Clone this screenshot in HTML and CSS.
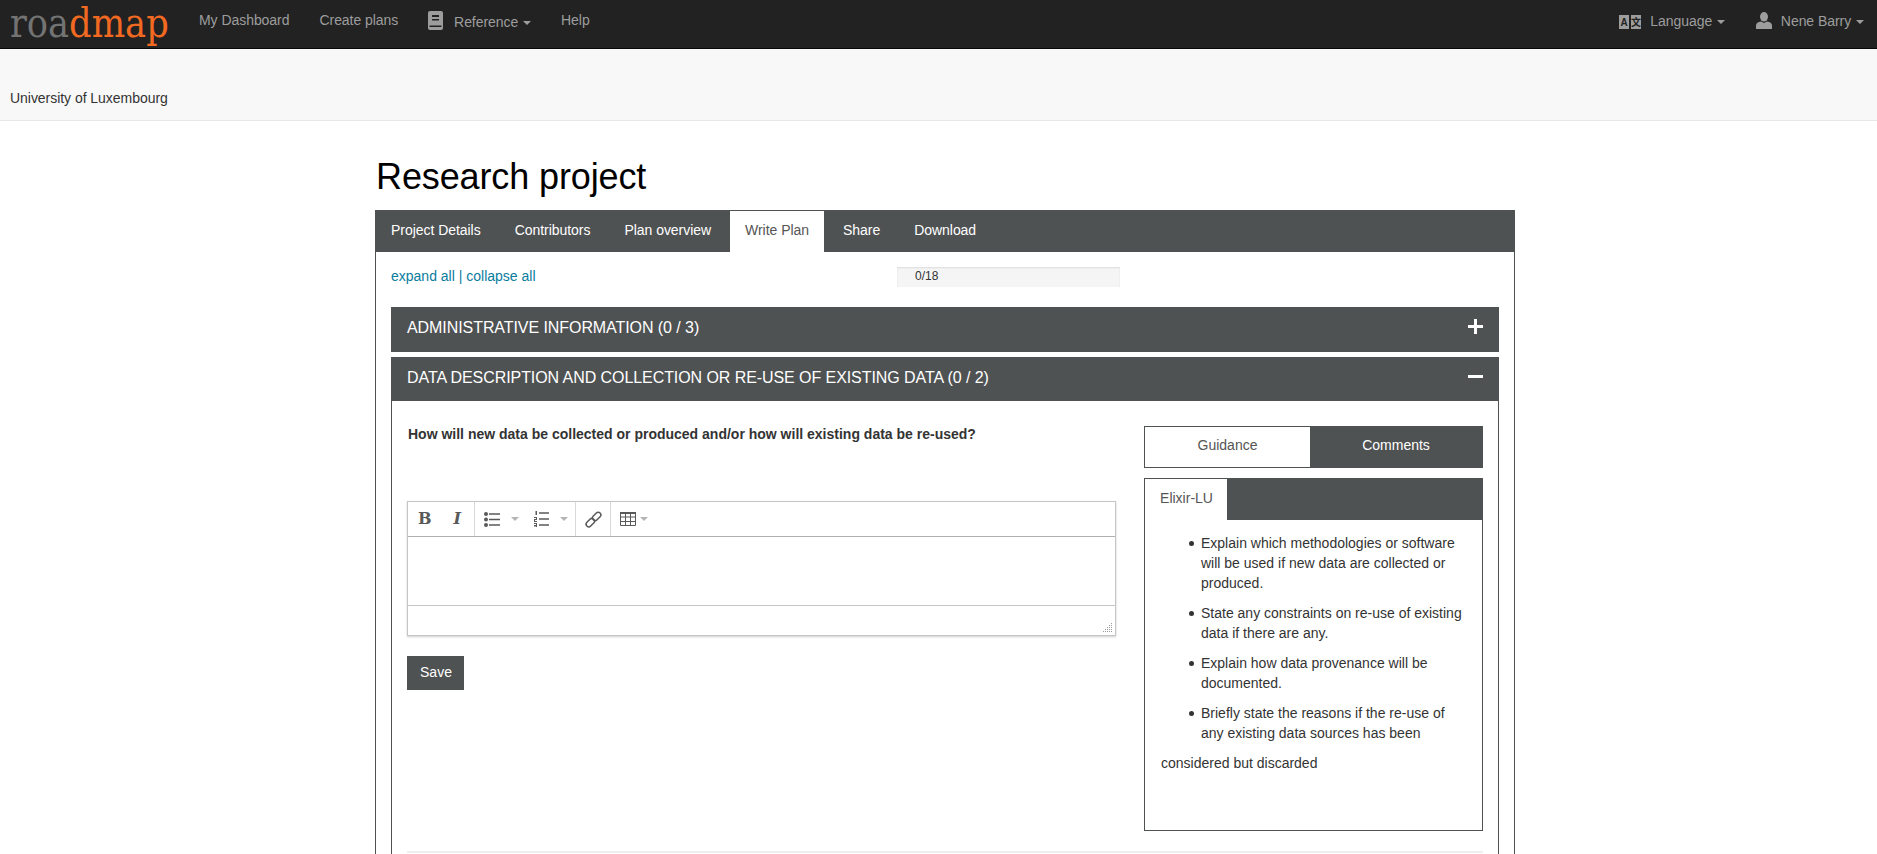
FILE: index.html
```html
<!DOCTYPE html>
<html>
    <head>
        <meta charset="utf-8">
        <title>Research project</title>
        <link rel="stylesheet" href="styles.css">
    </head>
    <body>
        <div id="topbar">
            <div class="logo-box">
                <a class="logo" href="#"><span class="logo-grey">roa</span><span class="logo-orange">dmap</span></a>
            </div>
            <ul class="topnav">
                <li><a href="#">My Dashboard</a></li>
                <li><a href="#">Create plans</a></li>
                <li class="with-icon">
                    <a href="#">
                        <svg class="nav-icon" width="15" height="19" viewBox="0 0 15 19">
                            <path fill="#9d9d9d" fill-rule="evenodd" d="M2 0h11a2 2 0 0 1 2 2v15a2 2 0 0 1-2 2H2a2 2 0 0 1-2-2V2a2 2 0 0 1 2-2zM4 4v2h7V4zM4 8v1.500h7V8zM1.500 14.500V16h12v-1.500z"/>
                        </svg>
                        Reference <span class="caret"></span>
                    </a>
                </li>
                <li><a href="#">Help</a></li>
            </ul>
            <ul class="topnav topnav-right">
                <li class="with-icon">
                    <a href="#">
                        <svg class="nav-icon icon-lang" width="22" height="14" viewBox="0 0 22 14">
                            <rect width="10" height="14" fill="#9d9d9d"/>
                            <rect x="12" width="10" height="14" fill="#9d9d9d"/>
                            <text x="5" y="11" class="icon-letter">A</text>
                            <text x="17" y="11" class="icon-letter">文</text>
                        </svg>
                        Language <span class="caret"></span>
                    </a>
                </li>
                <li class="with-icon">
                    <a href="#">
                        <svg class="nav-icon icon-user" width="16" height="17" viewBox="0 0 16 17">
                            <ellipse cx="8" cy="4.800" rx="4" ry="4.800" fill="#9d9d9d"/>
                            <path fill="#9d9d9d" d="M5 9.500l3 1.500 3-1.500c3 .5 5 1.700 5 3.800V17H0v-3.700c0-2.100 2-3.300 5-3.800z"/>
                        </svg>
                        Nene Barry <span class="caret"></span>
                    </a>
                </li>
            </ul>
        </div>

        <div id="org">University of Luxembourg</div>

        <div id="main">
            <h1>Research project</h1>

            <ul id="tabs">
                <li><a href="#">Project Details</a></li>
                <li><a href="#">Contributors</a></li>
                <li><a href="#">Plan overview</a></li>
                <li class="active"><a href="#">Write Plan</a></li>
                <li><a href="#">Share</a></li>
                <li><a href="#">Download</a></li>
            </ul>

            <div id="content">
                <div class="tools">
                    <div><a href="#">expand all</a> <span class="link-sep">|</span> <a href="#">collapse all</a></div>
                    <div class="progress">0/18</div>
                </div>

                <div class="section-head section-head-first">
                    <span>ADMINISTRATIVE INFORMATION (0 / 3)</span>
                    <span class="plus"></span>
                </div>

                <div class="section-head">
                    <span>DATA DESCRIPTION AND COLLECTION OR RE-USE OF EXISTING DATA (0 / 2)</span>
                    <span class="minus"></span>
                </div>

                <div class="section-body">
                    <div class="question-row">
                        <div>
                            <p class="question">How will new data be collected or produced and/or how will existing data be re-used?</p>

                            <div class="editor">
                                <div class="toolbar">
                                    <div class="tool-group group-text">
                                        <span class="tool-b">B</span>
                                        <span class="tool-i">I</span>
                                    </div>
                                    <div class="tool-group group-lists">
                                        <svg width="16" height="15" viewBox="0 0 16 15">
                                            <g fill="#595959">
                                                <circle cx="2" cy="2" r="2"/><circle cx="2" cy="7.500" r="2"/><circle cx="2" cy="13" r="2"/>
                                                <rect x="5" y="1.250" width="11" height="1.500"/><rect x="5" y="6.750" width="11" height="1.500"/><rect x="5" y="12.250" width="11" height="1.500"/>
                                            </g>
                                        </svg>
                                        <span class="tool-caret caret-list"></span>
                                        <svg width="15" height="16" viewBox="0 0 15 16">
                                            <g fill="#595959">
                                                <rect x="1.500" y="0" width="1.500" height="4"/>
                                                <rect x="0" y="6" width="3" height="1"/><rect x="2" y="7" width="1" height="1"/><rect x="0" y="8" width="3" height="1"/><rect x="0" y="9" width="1" height="1"/><rect x="0" y="10" width="3" height="1"/>
                                                <rect x="0" y="12" width="3" height="1"/><rect x="2" y="13" width="1" height="1"/><rect x="0" y="14" width="3" height="1"/><rect x="2" y="15" width="1" height="1"/><rect x="0" y="15.500" width="3" height=".5"/>
                                                <rect x="5" y="1.250" width="10" height="1.500"/><rect x="5" y="7.250" width="10" height="1.500"/><rect x="5" y="13.250" width="10" height="1.500"/>
                                            </g>
                                        </svg>
                                        <span class="tool-caret caret-list-last"></span>
                                    </div>
                                    <div class="tool-group group-link">
                                        <svg width="17" height="17" viewBox="0 0 16 16">
                                            <g fill="none" stroke="#595959" stroke-width="1.400">
                                                <rect x="8.500" y="0.500" width="5" height="9" rx="2.500" transform="rotate(45 11 5)"/>
                                                <rect x="2.500" y="6.500" width="5" height="9" rx="2.500" transform="rotate(45 5 11)"/>
                                            </g>
                                        </svg>
                                    </div>
                                    <div class="tool-group group-table">
                                        <svg width="16" height="14" viewBox="0 0 16 14">
                                            <path fill="none" stroke="#595959" d="M.5.500h15v13H.5zM.5 5h15M.5 9.500h15M5.500.500v13M10.500.500v13"/>
                                            <rect width="16" height="2" fill="#595959"/>
                                        </svg>
                                        <span class="tool-caret caret-table"></span>
                                    </div>
                                </div>
                                <div class="edit-area"></div>
                                <div class="statusbar">
                                    <svg width="10" height="10" viewBox="0 0 10 10">
                                        <g fill="#9a9a9a">
                                            <rect x="8" y="0" width="1" height="1"/><rect x="6" y="2" width="1" height="1"/><rect x="8" y="2" width="1" height="1"/>
                                            <rect x="4" y="4" width="1" height="1"/><rect x="6" y="4" width="1" height="1"/><rect x="8" y="4" width="1" height="1"/>
                                            <rect x="2" y="6" width="1" height="1"/><rect x="4" y="6" width="1" height="1"/><rect x="6" y="6" width="1" height="1"/><rect x="8" y="6" width="1" height="1"/>
                                            <rect x="0" y="8" width="1" height="1"/><rect x="2" y="8" width="1" height="1"/><rect x="4" y="8" width="1" height="1"/><rect x="6" y="8" width="1" height="1"/><rect x="8" y="8" width="1" height="1"/>
                                        </g>
                                    </svg>
                                </div>
                            </div>

                            <button class="save" type="button">Save</button>
                        </div>

                        <div class="side">
                            <div class="side-switch">
                                <div class="switch-on">Guidance</div>
                                <div class="switch-off">Comments</div>
                            </div>
                            <div class="guidance">
                                <div class="guidance-tabs">
                                    <div class="guidance-tab">Elixir-LU</div>
                                </div>
                                <div class="guidance-text">
                                    <ul>
                                        <li>Explain which methodologies or software will be used if new data are collected or produced.</li>
                                        <li>State any constraints on re-use of existing data if there are any.</li>
                                        <li>Explain how data provenance will be documented.</li>
                                        <li>Briefly state the reasons if the re-use of any existing data sources has been</li>
                                    </ul>
                                    <p>considered but discarded</p>
                                </div>
                            </div>
                        </div>
                    </div>
                    <hr>
                </div>
            </div>
        </div>
    </body>
</html>
```

FILE: styles.css
```css
html, body {
    margin: 0;
    height: 854px;
    overflow: hidden;
}

body {
    font-family: "Liberation Sans", Arial, sans-serif;
    font-size: 14px;
    line-height: 20px;
    color: #333333;
    background: white;
}

a {
    text-decoration: none;
}

ul {
    list-style: none;
    margin: 0;
    padding: 0;
}

/* top bar */
#topbar {
    display: flex;
    height: 48px;
    background: #222222;
    border-bottom: 1px solid #080808;
}

.logo-box {
    width: 199px;
    padding-left: 10px;
    box-sizing: border-box;
}

.logo {
    display: block;
    font-family: "DejaVu Serif", serif;
    font-size: 41px;
    line-height: 46px;
    white-space: nowrap;
    transform: scaleX(0.86);
    transform-origin: left;
}

.logo-grey {
    color: #737373;
}

.logo-orange {
    color: #f26a21;
}

.topnav {
    display: flex;
    gap: 30px;
    padding-top: 10px;
    letter-spacing: -0.05px;
}

.topnav-right {
    gap: 31px;
    margin-left: auto;
    padding-right: 13px;
}

.topnav a {
    color: #9d9d9d;
    white-space: nowrap;
}

.with-icon {
    padding-top: 1px;
}

.nav-icon {
    margin-right: 7px;
    vertical-align: -3px;
}

.icon-lang {
    margin-right: 5px;
}

.icon-user {
    margin-right: 5px;
}

.icon-letter {
    font-family: "Liberation Sans", "Noto Sans CJK SC", sans-serif;
    font-size: 10px;
    font-weight: bold;
    text-anchor: middle;
    fill: #222222;
}

.caret {
    display: inline-block;
    margin-left: 1px;
    vertical-align: middle;
    border-top: 4px solid #9d9d9d;
    border-left: 4px solid transparent;
    border-right: 4px solid transparent;
}

#org {
    height: 72px;
    box-sizing: border-box;
    padding: 39px 0 0 10px;
    letter-spacing: -0.04px;
    background: #f8f8f8;
    border-bottom: 1px solid #e7e7e7;
}

/* main column */
#main {
    width: 1140px;
    margin-left: 375px;
}

h1 {
    margin: 36px 0 13px 1px;
    font-size: 36px;
    font-weight: normal;
    line-height: 40px;
    letter-spacing: -0.12px;
    color: black;
}

#tabs {
    display: flex;
    gap: 4px;
    height: 41px;
    padding: 1px 0 0 1px;
    letter-spacing: -0.04px;
    background: #4f5253;
}

#tabs a {
    display: block;
    padding: 9px 15px 11px 15px;
    color: white;
}

#tabs .active {
    background: white;
}

#tabs .active a {
    color: #555555;
}

#content {
    height: 640px;
    padding: 15px 15px 0 15px;
    border: 1px solid #4f5253;
    border-top: none;
}

.tools {
    display: grid;
    grid-template-columns: 506px 223px;
    height: 20px;
    margin-bottom: 20px;
    line-height: 18px;
}

.tools a, .link-sep {
    color: #0a7c9e;
}

.progress {
    height: 20px;
    padding-left: 18px;
    box-sizing: border-box;
    font-size: 12px;
    color: #333333;
    background: #f5f5f5;
    box-shadow: inset 0 1px 2px rgba(0, 0, 0, 0.1);
}

.section-head {
    display: flex;
    justify-content: space-between;
    align-items: center;
    height: 44px;
    box-sizing: border-box;
    padding: 0 16px 3px 16px;
    font-size: 16px;
    letter-spacing: -0.07px;
    color: white;
    background: #4f5253;
}

.section-head-first {
    height: 45px;
    margin-bottom: 5px;
    padding-bottom: 4px;
}

.plus, .minus {
    position: relative;
    display: block;
    width: 15px;
    height: 15px;
    margin-top: -2px;
}

.plus::before, .minus::before {
    content: "";
    position: absolute;
    left: 0;
    top: 6px;
    width: 15px;
    height: 3px;
    background: white;
}

.plus::after {
    content: "";
    position: absolute;
    left: 6px;
    top: 0;
    width: 3px;
    height: 15px;
    background: white;
}

.section-body {
    height: 500px;
    padding: 23px 15px 0 15px;
    border-left: 1px solid #4f5253;
    border-right: 1px solid #4f5253;
}

.question-row {
    display: grid;
    grid-template-columns: 709px 339px;
    column-gap: 28px;
}

.question {
    margin: 0 0 57px 1px;
    font-weight: bold;
}

/* editor */
.editor {
    border: 1px solid #c5c5c5;
    box-shadow: 0 1px 2px rgba(0, 0, 0, 0.2);
}

.toolbar {
    display: flex;
    height: 34px;
    border-bottom: 1px solid #b0b0b0;
}

.tool-group {
    display: flex;
    align-items: center;
    box-sizing: border-box;
    border-right: 1px solid #d9d9d9;
}

.group-text {
    width: 67px;
    padding-left: 10px;
    gap: 22px;
}

.group-lists {
    width: 101px;
    padding-left: 9px;
}

.group-link {
    width: 35px;
    padding-left: 9px;
}

.group-table {
    padding-left: 9px;
    border-right: none;
}

.tool-b, .tool-i {
    font-family: "DejaVu Serif", serif;
    font-size: 16px;
    font-weight: bold;
    color: #595959;
}

.tool-i {
    font-style: italic;
}

.tool-caret {
    display: block;
    border-top: 4px solid #b5b5b5;
    border-left: 4px solid transparent;
    border-right: 4px solid transparent;
}

.caret-list {
    margin: 0 15px 0 11px;
}

.caret-list-last {
    margin-left: 11px;
}

.caret-table {
    margin-left: 4px;
}

.edit-area {
    height: 68px;
    border-bottom: 1px solid #c5c5c5;
}

.statusbar {
    display: flex;
    justify-content: flex-end;
    align-items: flex-end;
    height: 29px;
    padding: 0 2px 2px 0;
    box-sizing: border-box;
}

.save {
    display: block;
    width: 57px;
    height: 34px;
    margin-top: 20px;
    padding: 0 0 2px 1px;
    font-family: inherit;
    font-size: 14px;
    color: white;
    background: #4f5253;
    border: none;
}

/* guidance side */
.side {
    margin-top: 2px;
}

.side-switch {
    display: grid;
    grid-template-columns: 165px 1fr;
    height: 42px;
    margin-bottom: 10px;
    text-align: center;
    line-height: 36px;
    box-sizing: border-box;
    border: 1px solid #4f5253;
}

.switch-on {
    color: #555555;
}

.switch-off {
    color: white;
    background: #4f5253;
}

.guidance {
    height: 353px;
    box-sizing: border-box;
    border: 1px solid #4f5253;
    border-top: none;
}

.guidance-tabs {
    height: 42px;
    background: #4f5253;
    padding-top: 1px;
    box-sizing: border-box;
}

.guidance-tab {
    width: 82px;
    height: 41px;
    box-sizing: border-box;
    padding-left: 1px;
    line-height: 38px;
    text-align: center;
    color: #555555;
    background: white;
}

.guidance-text {
    padding: 13px 15px 0 16px;
}

.guidance-text ul {
    padding-left: 40px;
}

.guidance-text li {
    position: relative;
    margin-bottom: 10px;
}

/* small dot, closer to the text than the browser's disc */
.guidance-text li::before {
    content: "";
    position: absolute;
    left: -12px;
    top: 8px;
    width: 5px;
    height: 5px;
    border-radius: 50%;
    background: #333333;
}

.guidance-text p {
    margin: 0;
}

hr {
    height: 0;
    margin: 20px 0 0 0;
    border: none;
    border-top: 2px solid #eeeeee;
}
```
